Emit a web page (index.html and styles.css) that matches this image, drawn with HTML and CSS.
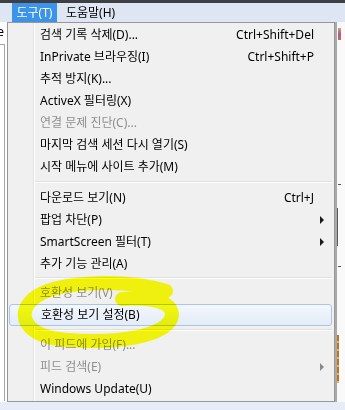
FILE: index.html
```html
<!DOCTYPE html>
<html lang="ko">
<head>
<meta charset="utf-8">
<link rel="stylesheet" href="styles.css">
</head>
<body>
<div class="frame">
  <div class="topbar"></div>
  <div class="menubar">
    <span class="mb-item active">도구(T)</span>
    <span class="mb-item">도움말(H)</span>
  </div>
  <div class="content">
    <div class="left">
      <div class="left-top"><span class="clip">e</span></div>
      <div class="left-box"></div>
    </div>
    <div class="menu">
      <div class="item"><span class="label">검색 기록 삭제(D)...</span><span class="key">Ctrl+Shift+Del</span></div>
      <div class="item"><span class="label">InPrivate 브라우징(I)</span><span class="key">Ctrl+Shift+P</span></div>
      <div class="item"><span class="label">추적 방지(K)...</span></div>
      <div class="item"><span class="label">ActiveX 필터링(X)</span></div>
      <div class="item disabled"><span class="label">연결 문제 진단(C)...</span></div>
      <div class="item"><span class="label">마지막 검색 세션 다시 열기(S)</span></div>
      <div class="item"><span class="label">시작 메뉴에 사이트 추가(M)</span></div>
      <div class="sep sep-first"></div>
      <div class="item"><span class="label">다운로드 보기(N)</span><span class="key">Ctrl+J</span></div>
      <div class="item"><span class="label">팝업 차단(P)</span><span class="arrow"></span></div>
      <div class="item"><span class="label">SmartScreen 필터(T)</span><span class="arrow"></span></div>
      <div class="item"><span class="label">추가 기능 관리(A)</span></div>
      <div class="sep"></div>
      <div class="item disabled"><span class="label">호환성 보기(V)</span></div>
      <div class="item hover"><span class="label">호환성 보기 설정(B)</span></div>
      <div class="sep"></div>
      <div class="item disabled"><span class="label">이 피드에 가입(F)...</span></div>
      <div class="item disabled"><span class="label">피드 검색(E)</span><span class="arrow"></span></div>
      <div class="item"><span class="label">Windows Update(U)</span></div>
    </div>
    <div class="right">
      <span class="mark mark-a"></span>
      <span class="mark mark-b"></span>
      <span class="mark mark-c"></span>
      <span class="mark mark-d"></span>
      <span class="mark mark-e"></span>
    </div>
  </div>
  <div class="footer"></div>
  <svg class="highlighter" width="345" height="410" viewBox="0 0 345 410">
    <path d="M166 291 C125 279 55 280 33 299 C16 314 24 337 68 340 C118 344 163 336 171 319 C177 302 152 297 122 299" fill="none" stroke="#ffff10" stroke-width="14" stroke-linecap="round" stroke-linejoin="round"/>
  </svg>
</div>
</body>
</html>
```
FILE: styles.css
```css
* { box-sizing: border-box; }
html, body { margin: 0; padding: 0; }
body {
  width: 345px;
  height: 410px;
  overflow: hidden;
  font-family: "Noto Sans", "Noto Sans CJK KR", sans-serif;
  font-size: 12px;
  color: #000;
  background: #fff;
}
.frame {
  position: relative;
  width: 345px;
  height: 410px;
  display: flex;
  flex-direction: column;
}
.topbar { height: 3px; background: #3d3f44; }
.menubar {
  height: 19px;
  background: #dde6f2;
  display: flex;
  align-items: stretch;
  padding-left: 12px;
  gap: 5px;
}
.mb-item {
  display: flex;
  align-items: center;
  padding: 0 4px;
  line-height: 19px;
}
.mb-item.active { background: #3c93ea; color: #fff; width: 45px; justify-content: center; }
.content {
  height: 380px;
  display: flex;
}
.left {
  width: 7px;
  display: flex;
  flex-direction: column;
  background: #fff;
}
.left-top {
  height: 22px;
  overflow: hidden;
  display: flex;
  justify-content: flex-end;
  padding-top: 2px;
}
.clip { display: block; width: 4px; overflow: hidden; direction: rtl; line-height: 16px; margin-right: 3px; }
.left-box {
  width: 5px;
  height: 357px;
  border-top: 1px solid #a5a5a5;
  border-right: 1px solid #a5a5a5;
}
.menu {
  width: 328px;
  height: 380px;
  border: 1px solid #979797;
  box-shadow: 2px 0 0 #a9a9a9;
  padding: 1px 0;
  background-color: #f0f0f0;
  background-image: linear-gradient(to right, transparent 25px, #e2e3e3 25px, #e2e3e3 26px, #ffffff 26px, #ffffff 27px, transparent 27px);
  display: flex;
  flex-direction: column;
  position: relative;
  z-index: 1;
}
.item {
  height: 22px;
  display: flex;
  align-items: center;
  padding: 0 20px 0 32px;
  line-height: 22px;
  white-space: nowrap;
}
.item .label { flex: 1; }
.item .key { color: #000; }
.item.disabled { color: #8e8e8e; }
.item.hover {
  margin: 0 2px 0 1px;
  padding-left: 31px;
  border: 1px solid #a9c6e8;
  border-radius: 3px;
  background: linear-gradient(#f3f7fc, #e3ecf8);
}
.arrow {
  width: 0;
  height: 0;
  border-top: 4px solid transparent;
  border-bottom: 4px solid transparent;
  border-left: 4px solid #1a1a1a;
  margin-right: -10px;
}
.item.disabled .arrow { border-left-color: #8a8a8a; }
.sep {
  height: 8px;
  display: flex;
  flex-direction: column;
  justify-content: center;
  margin: 0 2px 0 27px;
}
.sep-first { height: 9px; }
.sep::before { content: ""; display: block; height: 1px; background: #e0e0e0; }
.sep::after { content: ""; display: block; height: 1px; background: #ffffff; }
.right {
  flex: 1;
  position: relative;
  background: #f9f9f9;
}
.mark { position: absolute; display: block; }
.mark-a { left: 3px; top: 6px; width: 3px; height: 12px; background: linear-gradient(#d8a070, #b05a8a, #c07050); }
.mark-b { left: 1px; top: 186px; width: 2px; height: 38px; background: #5a5a5a; }
.mark-c { left: 3px; top: 162px; width: 3px; height: 1px; background: #555; }
.mark-d { left: 3px; top: 244px; width: 3px; height: 1px; background: #555; }
.mark-e { left: 1px; top: 313px; width: 3px; height: 48px; background: repeating-linear-gradient(#c07418 0 6px, #e6b070 6px 8px); }
.footer { height: 8px; background: #e6edf6; }
.highlighter {
  position: absolute;
  left: 0;
  top: 0;
  pointer-events: none;
  mix-blend-mode: multiply;
  z-index: 2;
}
```
